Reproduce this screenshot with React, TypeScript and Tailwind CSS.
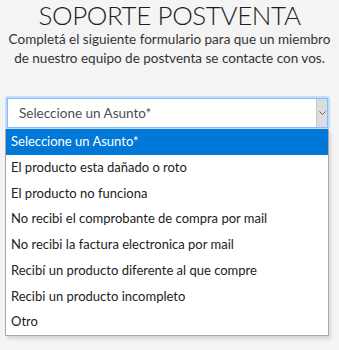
import React from "react";

const options = [
  "El producto esta dañado o roto",
  "El producto no funciona",
  "No recibi el comprobante de compra por mail",
  "No recibi la factura electronica por mail",
  "Recibí un producto diferente al que compre",
  "Recibi un producto incompleto",
  "Otro",
];

export default function App() {
  return (
    <div className="min-h-[350px] bg-[#f4f4f4] font-['Lato',sans-serif] px-[5px]">
      <h1 className="pt-[1px] text-center text-[26px] font-light leading-[29px] tracking-[-0.4px] text-[#1e1e1e] whitespace-nowrap">
        SOPORTE POSTVENTA
      </h1>
      <p className="text-center text-[13.5px] leading-[19px] text-[#333] whitespace-nowrap">
        Completá el siguiente formulario para que un miembro
        <br />
        de nuestro equipo de postventa se contacte con vos.
      </p>
      <div className="mt-[28px] w-[325px]">
        <div className="rounded-[3px] p-[2px] bg-[#c3dcfa]">
          <div className="flex h-[30px] items-center border border-[#80bdff] bg-white">
            <span className="flex-1 pl-[11px] text-[13.5px] text-[#495057]">Seleccione un Asunto*</span>
            <span className="flex h-full w-[11px] items-center justify-center bg-[#dcdcdc] border-l border-[#c8c8c8]">
              <svg width="7" height="4" viewBox="0 0 7 4">
                <path d="M0.5 0.5 L3.5 3.5 L6.5 0.5" fill="none" stroke="#606060" strokeWidth="1" />
              </svg>
            </span>
          </div>
        </div>
        <div className="-mt-[1px] w-[324px] border border-[#a9a9a9] border-t-0 bg-white shadow-[2px_3px_3px_rgba(0,0,0,0.12)]">
          <div className="flex h-[26px] items-center bg-[#0078d7] pl-[5px] text-[13px] text-white">
            Seleccione un Asunto*
          </div>
          {options.map((o) => (
            <div key={o} className="flex h-[25.7px] items-center pl-[5px] text-[13px] text-[#222]">
              {o}
            </div>
          ))}
        </div>
      </div>
    </div>
  );
}
